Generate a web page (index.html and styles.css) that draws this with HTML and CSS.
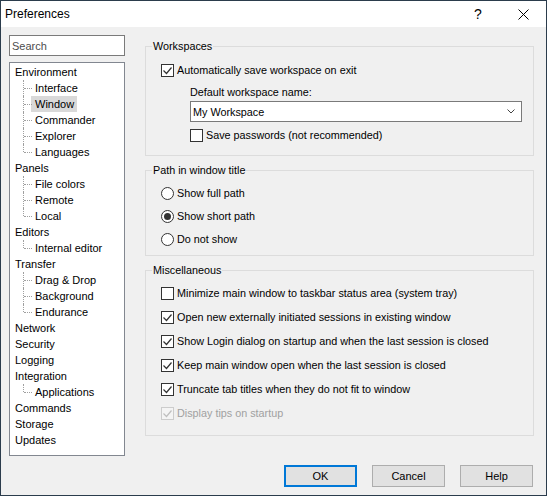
FILE: index.html
```html
<!DOCTYPE html>
<html lang="en">
<head>
    <meta charset="UTF-8">
    <title>Preferences</title>
    <link rel="stylesheet" href="styles.css">
</head>
<body>
    <div class="window">
        <div class="titlebar">
            <span class="title">Preferences</span>
            <span class="tb-help">?</span>
            <span class="tb-close">
                <svg width="11" height="11" viewBox="0 0 11 11"><path d="M0.5 0.5L10.5 10.5M10.5 0.5L0.5 10.5" stroke="#000" stroke-width="1" fill="none"/></svg>
            </span>
        </div>

        <div class="main">
            <div class="sidebar">
                <input class="search" type="text" placeholder="Search">
                <ul class="tree">
                    <li class="node"><span class="label">Environment</span>
                        <ul class="children">
                            <li><span>Interface</span></li>
                            <li><span class="sel">Window</span></li>
                            <li><span>Commander</span></li>
                            <li><span>Explorer</span></li>
                            <li><span>Languages</span></li>
                        </ul>
                    </li>
                    <li class="node"><span class="label">Panels</span>
                        <ul class="children">
                            <li><span>File colors</span></li>
                            <li><span>Remote</span></li>
                            <li><span>Local</span></li>
                        </ul>
                    </li>
                    <li class="node"><span class="label">Editors</span>
                        <ul class="children">
                            <li><span>Internal editor</span></li>
                        </ul>
                    </li>
                    <li class="node"><span class="label">Transfer</span>
                        <ul class="children">
                            <li><span>Drag &amp; Drop</span></li>
                            <li><span>Background</span></li>
                            <li><span>Endurance</span></li>
                        </ul>
                    </li>
                    <li class="node"><span class="label">Network</span></li>
                    <li class="node"><span class="label">Security</span></li>
                    <li class="node"><span class="label">Logging</span></li>
                    <li class="node"><span class="label">Integration</span>
                        <ul class="children">
                            <li><span>Applications</span></li>
                        </ul>
                    </li>
                    <li class="node"><span class="label">Commands</span></li>
                    <li class="node"><span class="label">Storage</span></li>
                    <li class="node"><span class="label">Updates</span></li>
                </ul>
            </div>

            <div class="panel">
                <fieldset>
                    <legend>Workspaces</legend>
                    <div class="group-body ws">
                        <div class="opt">
                            <svg class="cb" viewBox="0 0 13 13"><rect x="0.5" y="0.5" width="12" height="12" fill="#fff" stroke="#333"/><path d="M2.5 6.5l3 3 5-6" fill="none" stroke="#333" stroke-width="1.2"/></svg>
                            <span>Automatically save workspace on exit</span>
                        </div>
                        <div class="sub">
                            <div class="field-label">Default workspace name:</div>
                            <div class="combo">
                                <span>My Workspace</span>
                                <svg width="8" height="5" viewBox="0 0 8 5"><path d="M0.5 0.5L4 4L7.5 0.5" fill="none" stroke="#444" stroke-width="1"/></svg>
                            </div>
                            <div class="opt pw">
                                <svg class="cb" viewBox="0 0 13 13"><rect x="0.5" y="0.5" width="12" height="12" fill="#fff" stroke="#333"/></svg>
                                <span>Save passwords (not recommended)</span>
                            </div>
                        </div>
                    </div>
                </fieldset>

                <fieldset>
                    <legend>Path in window title</legend>
                    <div class="group-body radios">
                        <div class="opt">
                            <svg class="cb" viewBox="0 0 13 13"><circle cx="6.5" cy="6.5" r="6" fill="#fff" stroke="#333"/></svg>
                            <span>Show full path</span>
                        </div>
                        <div class="opt">
                            <svg class="cb" viewBox="0 0 13 13"><circle cx="6.5" cy="6.5" r="6" fill="#fff" stroke="#333"/><circle cx="6.5" cy="6.5" r="3.5" fill="#333"/></svg>
                            <span>Show short path</span>
                        </div>
                        <div class="opt">
                            <svg class="cb" viewBox="0 0 13 13"><circle cx="6.5" cy="6.5" r="6" fill="#fff" stroke="#333"/></svg>
                            <span>Do not show</span>
                        </div>
                    </div>
                </fieldset>

                <fieldset>
                    <legend>Miscellaneous</legend>
                    <div class="group-body misc">
                        <div class="opt">
                            <svg class="cb" viewBox="0 0 13 13"><rect x="0.5" y="0.5" width="12" height="12" fill="#fff" stroke="#333"/></svg>
                            <span>Minimize main window to taskbar status area (system tray)</span>
                        </div>
                        <div class="opt">
                            <svg class="cb" viewBox="0 0 13 13"><rect x="0.5" y="0.5" width="12" height="12" fill="#fff" stroke="#333"/><path d="M2.5 6.5l3 3 5-6" fill="none" stroke="#333" stroke-width="1.2"/></svg>
                            <span>Open new externally initiated sessions in existing window</span>
                        </div>
                        <div class="opt">
                            <svg class="cb" viewBox="0 0 13 13"><rect x="0.5" y="0.5" width="12" height="12" fill="#fff" stroke="#333"/><path d="M2.5 6.5l3 3 5-6" fill="none" stroke="#333" stroke-width="1.2"/></svg>
                            <span>Show Login dialog on startup and when the last session is closed</span>
                        </div>
                        <div class="opt">
                            <svg class="cb" viewBox="0 0 13 13"><rect x="0.5" y="0.5" width="12" height="12" fill="#fff" stroke="#333"/><path d="M2.5 6.5l3 3 5-6" fill="none" stroke="#333" stroke-width="1.2"/></svg>
                            <span>Keep main window open when the last session is closed</span>
                        </div>
                        <div class="opt">
                            <svg class="cb" viewBox="0 0 13 13"><rect x="0.5" y="0.5" width="12" height="12" fill="#fff" stroke="#333"/><path d="M2.5 6.5l3 3 5-6" fill="none" stroke="#333" stroke-width="1.2"/></svg>
                            <span>Truncate tab titles when they do not fit to window</span>
                        </div>
                        <div class="opt disabled">
                            <svg class="cb" viewBox="0 0 13 13"><rect x="0.5" y="0.5" width="12" height="12" fill="#f4f4f4" stroke="#cccccc"/><path d="M2.5 6.5l3 3 5-6" fill="none" stroke="#bfbfbf" stroke-width="1.2"/></svg>
                            <span>Display tips on startup</span>
                        </div>
                    </div>
                </fieldset>
            </div>
        </div>

        <div class="buttons">
            <button class="btn default">OK</button>
            <button class="btn">Cancel</button>
            <button class="btn">Help</button>
        </div>
    </div>
</body>
</html>
```

FILE: styles.css
```css
body {
    margin: 0;
    font-family: "Liberation Sans", Arial, sans-serif;
    font-size: 11px;
    color: #000;
}
.window {
    width: 547px;
    height: 496px;
    box-sizing: border-box;
    border: 1px solid #2b3c4c;
    background-color: #f0f0f0;
    display: flex;
    flex-direction: column;
}

/* title bar */
.titlebar {
    height: 26px;
    flex-shrink: 0;
    background-color: #fff;
    display: flex;
    align-items: center;
}
.title {
    flex: 1;
    padding-left: 4px;
    font-size: 12px;
}
.tb-help {
    width: 46px;
    text-align: center;
    font-size: 14px;
}
.tb-close {
    width: 45px;
    display: flex;
    justify-content: center;
}

/* main area */
.main {
    display: flex;
    padding: 8px 12px 0 8px;
}
.sidebar {
    width: 116px;
    display: flex;
    flex-direction: column;
    gap: 6px;
}
.search {
    height: 21px;
    box-sizing: border-box;
    width: 100%;
    margin: 0;
    padding: 0 2px;
    border: 1px solid #7a7a7a;
    background: #fff;
    font: inherit;
    outline: none;
}
.search::placeholder {
    color: #4d4d4d;
}

/* tree */
.tree {
    height: 394px;
    box-sizing: border-box;
    margin: 0;
    padding: 1px 0 0 0;
    border: 1px solid #828790;
    background-color: #fff;
    list-style: none;
}
.tree ul {
    margin: 0;
    padding: 0;
    list-style: none;
}
.node .label {
    display: block;
    height: 16px;
    line-height: 16px;
    padding-left: 5px;
}
.children li {
    position: relative;
    height: 16px;
    line-height: 16px;
    padding-left: 21px;
}
.children li::before {
    content: '';
    position: absolute;
    left: 13px;
    top: 0;
    bottom: 0;
    border-left: 1px dotted #a0a0a0;
}
.children li:last-child::before {
    bottom: 8px;
}
.children li::after {
    content: '';
    position: absolute;
    left: 14px;
    top: 8px;
    width: 8px;
    border-top: 1px dotted #a0a0a0;
}
.children span {
    display: inline-block;
    padding: 0 3px 0 4px;
}
.children .sel {
    background-color: #d9d9d9;
}

/* right panel */
.panel {
    flex: 1;
    margin-left: 20px;
    padding-top: 5px;
    display: flex;
    flex-direction: column;
    gap: 8px;
    font-size: 10.8px;
}
fieldset {
    margin: 0;
    padding: 0;
    min-width: 0;
    border: 1px solid #dcdcdc;
}
legend {
    margin-left: 6px;
    padding: 0 1px;
    line-height: 13px;
}
.group-body {
    display: flex;
    flex-direction: column;
    padding: 8px 11px 8px 15px;
}
.ws {
    padding-top: 9px;
    padding-bottom: 12px;
}
.radios {
    gap: 7px;
}
.misc {
    gap: 8px;
    padding-bottom: 14px;
}
.opt {
    display: flex;
    align-items: center;
    gap: 3px;
    height: 16px;
    white-space: nowrap;
}
.cb {
    width: 13px;
    height: 13px;
    flex-shrink: 0;
}
.opt.disabled {
    color: #a0a0a0;
}
.sub {
    margin-left: 29px;
    display: flex;
    flex-direction: column;
}
.field-label {
    height: 16px;
    line-height: 16px;
    margin-top: 6px;
}
.combo {
    margin-top: 1px;
    height: 21px;
    box-sizing: border-box;
    border: 1px solid #7a7a7a;
    background-color: #fff;
    display: flex;
    align-items: center;
    justify-content: space-between;
    padding: 0 6px 0 2px;
}
.pw {
    margin-top: 5px;
}

/* bottom buttons */
.buttons {
    display: flex;
    justify-content: flex-end;
    gap: 15px;
    padding-right: 13px;
    margin-top: 9px;
}
.btn {
    width: 73px;
    height: 22px;
    box-sizing: border-box;
    margin: 0;
    padding: 0;
    border: 1px solid #adadad;
    background-color: #e1e1e1;
    font: inherit;
    color: #000;
}
.btn.default {
    border: 2px solid #0078d7;
}
```
